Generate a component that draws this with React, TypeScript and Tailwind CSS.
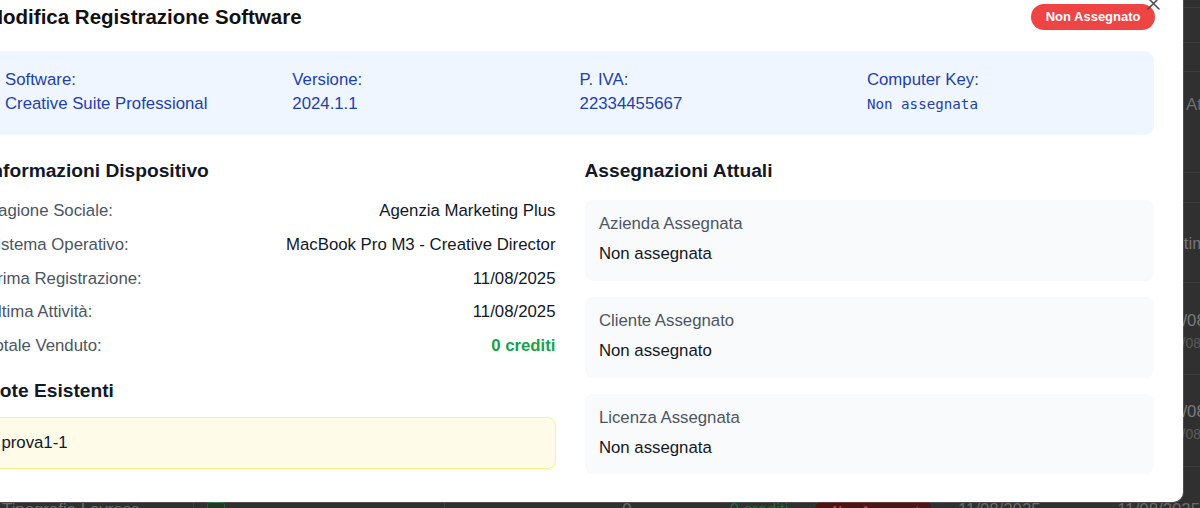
import React from "react";

const rows = [
  { label: "Ragione Sociale:", value: "Agenzia Marketing Plus" },
  { label: "Sistema Operativo:", value: "MacBook Pro M3 - Creative Director" },
  { label: "Prima Registrazione:", value: "11/08/2025" },
  { label: "Ultima Attività:", value: "11/08/2025" },
];

const cards = [
  { label: "Azienda Assegnata", value: "Non assegnata" },
  { label: "Cliente Assegnato", value: "Non assegnato" },
  { label: "Licenza Assegnata", value: "Non assegnata" },
];

function Background() {
  return (
    <div className="flex flex-col text-[16.8px] leading-[24px]">
      <div className="h-[8px] border-b border-[#3d3d3d]" />
      <div className="h-[35px] border-b border-[#3d3d3d]" />
      <div className="h-[29px] border-b border-[#3d3d3d]" />
      <div className="h-[101px] border-b border-[#3d3d3d] pl-[1186px] pt-[21px] text-[#6e6e6e] whitespace-nowrap">
        Attività
      </div>
      <div className="h-[30px] border-b border-[#3d3d3d]" />
      <div className="h-[80px] border-b border-[#3d3d3d] pl-[1168px] pt-[29px] text-[#747474] whitespace-nowrap">
        Ultima Attività
      </div>
      <div className="h-[92px] border-b border-[#3d3d3d] pl-[1165px] pt-[26px] whitespace-nowrap">
        <div className="text-[#7a7a7a]">11/08/2025</div>
        <div className="text-[14px] leading-[20px] text-[#5a5a5a] pl-[2px]">11/08/2025</div>
      </div>
      <div className="h-[92px] border-b border-[#3d3d3d] pl-[1165px] pt-[25px] whitespace-nowrap">
        <div className="text-[#7a7a7a]">11/08/2025</div>
        <div className="text-[14px] leading-[20px] text-[#5a5a5a] pl-[2px]">11/08/2025</div>
      </div>
      <div className="flex items-start pt-[31px] whitespace-nowrap text-[#6a6a6a]">
        <div className="w-[205px] pl-[2px]">Tipografia Lavress</div>
        <div className="w-[265px] border-l border-[#3d3d3d] pl-[13px] pt-[4px]">
          <div className="w-[18px] h-[18px] rounded-[3px] border border-[#1f5f33] bg-[#1c3a24]" />
        </div>
        <div className="w-[292px] border-l border-[#3d3d3d] pl-[177px]">0</div>
        <div className="w-[90px] text-[#1f6a35]">0 crediti</div>
        <div className="w-[152px]">
          <div className="w-[117px] h-[26px] rounded-full bg-[#4a1515] pl-[18px] text-[#a54040] text-[13px] font-bold leading-[26px]">
            Non Assegnato
          </div>
        </div>
        <div className="w-[169px]">11/08/2025</div>
        <div>11/08/2025</div>
      </div>
    </div>
  );
}

export default function App() {
  return (
    <div className="relative w-[1200px] h-[508px] overflow-hidden bg-[#303030] font-['Liberation_Sans',Arial,sans-serif]">
      <Background />

      <div className="absolute left-[-38px] top-[-29px] w-[1221px] bg-white rounded-[10px] pt-[29px] pl-[24px] pr-[29px] pb-[28px] shadow-[0_0_0_1px_rgba(255,255,255,0.15)]">
        <svg
          className="absolute left-[1184px] top-[25px]"
          width="15"
          height="15"
          viewBox="0 0 15 15"
          fill="none"
          stroke="#4b4b4b"
          strokeWidth="1.5"
          strokeLinecap="round"
        >
          <path d="M2 2L13 13M13 2L2 13" />
        </svg>

        {/* Header */}
        <div className="flex items-center justify-between h-[34px]">
          <h2 className="text-[20.5px] leading-[34px] font-bold text-[#111111]">
            Modifica Registrazione Software
          </h2>
          <span className="flex items-center h-[26px] px-[14.5px] rounded-full bg-[#ef4444] text-white text-[13px] font-bold -mr-[1px]">
            Non Assegnato
          </span>
        </div>

        {/* Info panel */}
        <div className="mt-[17px] rounded-[10px] bg-[#eff6ff] px-[19px] pt-[17px] pb-[19px] grid grid-cols-4 gap-x-[19.2px] text-[16.8px] leading-[24px] text-[#1e40af]">
          <div>
            <div>Software:</div>
            <div>Creative Suite Professional</div>
          </div>
          <div>
            <div>Versione:</div>
            <div>2024.1.1</div>
          </div>
          <div>
            <div>P. IVA:</div>
            <div>22334455667</div>
          </div>
          <div>
            <div>Computer Key:</div>
            <div className="font-['DejaVu_Sans_Mono',monospace] text-[14.2px]">Non assegnata</div>
          </div>
        </div>

        {/* Two columns */}
        <div className="mt-[21px] grid grid-cols-2 gap-x-[29px]">
          <div>
            <h3 className="text-[19.2px] leading-[29px] font-bold text-[#111827] mb-[14px]">
              Informazioni Dispositivo
            </h3>
            <div className="flex flex-col gap-[9.8px] text-[16.8px] leading-[24px]">
              {rows.map((r) => (
                <div key={r.label} className="flex justify-between">
                  <span className="text-[#4b5563]">{r.label}</span>
                  <span className="text-[#111827]">{r.value}</span>
                </div>
              ))}
              <div className="flex justify-between">
                <span className="text-[#4b5563]">Totale Venduto:</span>
                <span className="text-[#16a34a] font-bold">0 crediti</span>
              </div>
            </div>

            <h3 className="mt-[18px] text-[19.2px] leading-[29px] font-bold text-[#111827] mb-[12px]">
              Note Esistenti
            </h3>
            <div className="rounded-[8px] border border-[#fef08a] bg-[#fefce8] px-[14.4px] py-[13px] text-[16.8px] leading-[24px] text-[#111827]">
              prova1-1
            </div>
          </div>

          <div>
            <h3 className="text-[19.2px] leading-[29px] font-bold text-[#111827] mb-[15px]">
              Assegnazioni Attuali
            </h3>
            <div className="flex flex-col gap-[16px] text-[16.8px] leading-[24px]">
              {cards.map((c) => (
                <div key={c.label} className="rounded-[8px] bg-[#f9fafb] px-[14.4px] pt-[12.4px] pb-[14.4px]">
                  <div className="text-[#4b5563]">{c.label}</div>
                  <div className="mt-[6px] text-[#111827]">{c.value}</div>
                </div>
              ))}
            </div>
          </div>
        </div>
      </div>
    </div>
  );
}
